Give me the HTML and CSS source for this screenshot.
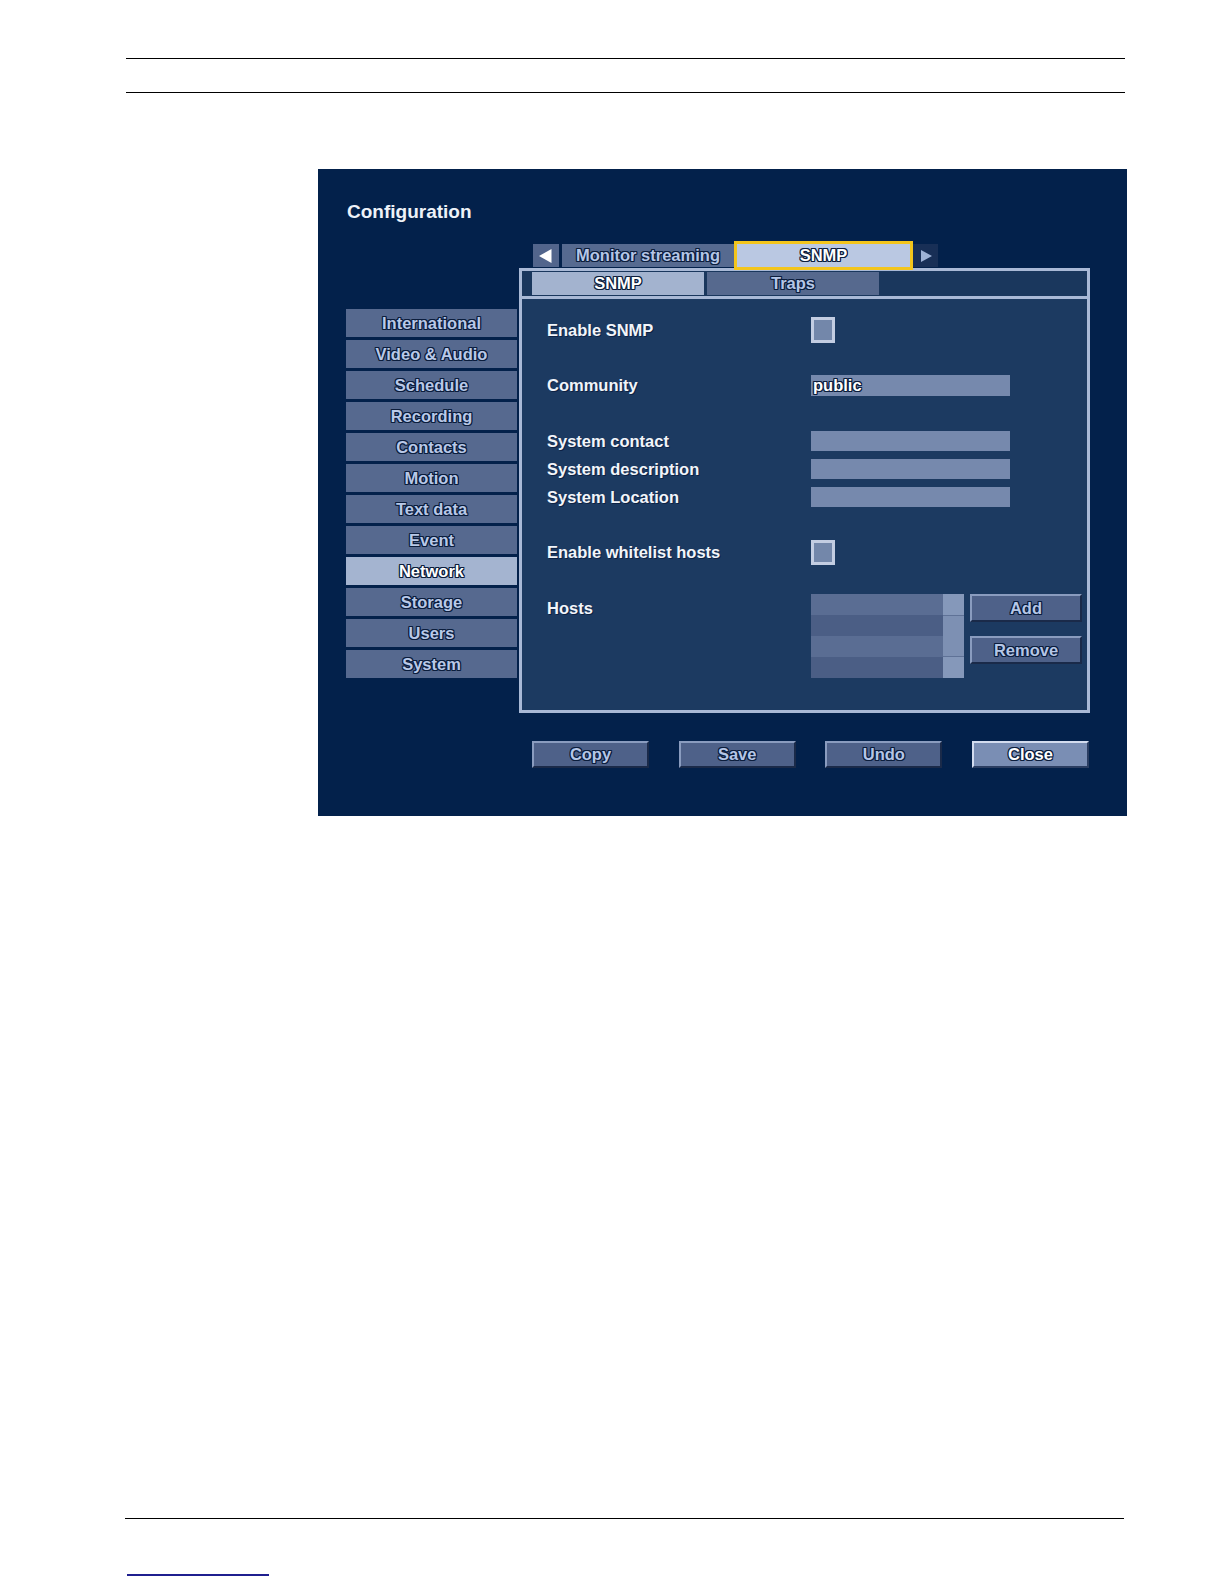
FILE: index.html
```html
<!DOCTYPE html>
<html lang="en">
<head>
<meta charset="utf-8">
<title>Configuration - SNMP</title>
<link rel="stylesheet" href="styles.css">
</head>
<body>
<div class="page">
  <div class="doc-head"></div>

  <div class="shot">
    <div class="title">Configuration</div>
    <div class="shot-body">
      <nav class="side">
        <div class="side-item">International</div>
        <div class="side-item">Video &amp; Audio</div>
        <div class="side-item">Schedule</div>
        <div class="side-item">Recording</div>
        <div class="side-item">Contacts</div>
        <div class="side-item">Motion</div>
        <div class="side-item">Text data</div>
        <div class="side-item">Event</div>
        <div class="side-item active">Network</div>
        <div class="side-item">Storage</div>
        <div class="side-item">Users</div>
        <div class="side-item">System</div>
      </nav>

      <div class="main">
        <div class="top-tabs">
          <div class="arrow-btn">
            <svg width="26" height="23" viewBox="0 0 26 23"><polygon points="18.5,5 18.5,19 6,12" fill="#ffffff"/></svg>
          </div>
          <div class="top-tab">Monitor streaming</div>
          <div class="top-tab focused">SNMP</div>
          <div class="arrow-btn dim">
            <svg width="25" height="23" viewBox="0 0 25 23"><polygon points="8,6 8,18 19,12" fill="#9db2d6"/></svg>
          </div>
        </div>

        <div class="panel">
          <div class="sub-tabs">
            <div class="sub-tab active">SNMP</div>
            <div class="sub-tab">Traps</div>
          </div>

          <div class="form">
            <div class="row r-snmp">
              <span class="label">Enable SNMP</span>
              <span class="check"></span>
            </div>
            <div class="row r-community">
              <span class="label">Community</span>
              <span class="field">public</span>
            </div>
            <div class="row r-contact">
              <span class="label">System contact</span>
              <span class="field"></span>
            </div>
            <div class="row r-near">
              <span class="label">System description</span>
              <span class="field"></span>
            </div>
            <div class="row r-near">
              <span class="label">System Location</span>
              <span class="field"></span>
            </div>
            <div class="row r-white">
              <span class="label">Enable whitelist hosts</span>
              <span class="check"></span>
            </div>
            <div class="row r-hosts">
              <span class="label label-top">Hosts</span>
              <div class="hosts">
                <div class="host-list">
                  <div class="host-rows">
                    <div class="host-row"></div>
                    <div class="host-row alt"></div>
                    <div class="host-row"></div>
                    <div class="host-row alt"></div>
                  </div>
                  <div class="scroll">
                    <div class="scroll-btn"></div>
                    <div class="scroll-track"></div>
                    <div class="scroll-btn"></div>
                  </div>
                </div>
                <div class="host-btns">
                  <div class="btn btn-add">Add</div>
                  <div class="btn btn-remove">Remove</div>
                </div>
              </div>
            </div>
          </div>
        </div>

        <div class="actions">
          <div class="btn btn-act">Copy</div>
          <div class="btn btn-act">Save</div>
          <div class="btn btn-act">Undo</div>
          <div class="btn btn-act primary">Close</div>
        </div>
      </div>
    </div>
  </div>

  <div class="doc-foot"></div>
  <div class="doc-link"></div>
</div>
</body>
</html>
```

FILE: styles.css
```css
:root {
  --ol: -1px -1px 0 #0b1d3c, 0 -1px 0 #0b1d3c, 1px -1px 0 #0b1d3c,
        -1px 0 0 #0b1d3c, 1px 0 0 #0b1d3c,
        -1px 1px 0 #0b1d3c, 0 1px 0 #0b1d3c, 1px 1px 0 #0b1d3c;
}

html, body {
  margin: 0;
  padding: 0;
  background: #ffffff;
}

body {
  font-family: "Liberation Sans", Arial, sans-serif;
}

.page {
  width: 1224px;
  min-height: 1584px;
}

.doc-head {
  margin: 58px 0 0 126px;
  width: 999px;
  height: 33px;
  border-top: 1px solid #000;
  border-bottom: 1px solid #000;
}

.shot {
  margin: 76px 0 0 318px;
  width: 809px;
  height: 647px;
  background: #03214b;
  box-sizing: border-box;
  overflow: hidden;
}

.title {
  padding: 32px 0 0 29px;
  line-height: 22px;
  font-size: 19px;
  font-weight: bold;
  color: #eef2f8;
}

.shot-body {
  display: flex;
  margin-top: 21px;
  padding-left: 28px;
}

/* sidebar */
.side {
  width: 171px;
  margin-top: 65px;
  margin-right: 2px;
  display: flex;
  flex-direction: column;
  gap: 3px;
}

.side-item {
  height: 28px;
  line-height: 28px;
  background: #56698f;
  color: #b9c9e8;
  text-align: center;
  font-size: 16.5px;
  font-weight: bold;
  text-shadow: var(--ol);
}

.side-item.active {
  background: #a4b4d0;
  color: #ffffff;
}

/* main column */
.main {
  width: 571px;
}

.top-tabs {
  height: 24px;
  display: flex;
  align-items: flex-start;
  gap: 3px;
  padding-left: 14px;
}

.arrow-btn {
  width: 26px;
  height: 23px;
  background: #52658c;
}

.arrow-btn svg {
  display: block;
}

.arrow-btn.dim {
  width: 25px;
  background: #182f56;
}

.top-tab {
  width: 172px;
  height: 23px;
  line-height: 23px;
  background: #566a90;
  color: #b5c6e6;
  text-align: center;
  font-size: 16.5px;
  font-weight: bold;
  text-shadow: var(--ol);
}

.top-tab.focused {
  width: 173px;
  background: #bac8e2;
  color: #ffffff;
  outline: 3px solid #f3c51c;
  position: relative;
  z-index: 2;
}

/* panel */
.panel {
  height: 445px;
  box-sizing: border-box;
  border: 3px solid #a9b9d6;
  background: #1c3a61;
}

.sub-tabs {
  box-sizing: border-box;
  height: 28px;
  padding: 1px 0 1px 10px;
  border-bottom: 3px solid #a9b9d6;
  display: flex;
  gap: 3px;
  background: #1a375d;
}

.sub-tab {
  width: 172px;
  height: 23px;
  line-height: 23px;
  background: #56698e;
  color: #b5c6e6;
  text-align: center;
  font-size: 16.5px;
  font-weight: bold;
  text-shadow: var(--ol);
}

.sub-tab.active {
  background: #a3b3cf;
  color: #ffffff;
}

.form {
  padding: 18px 0 0 25px;
}

.row {
  display: flex;
  align-items: center;
}

.r-community { margin-top: 32px; }
.r-contact { margin-top: 35px; }
.r-near { margin-top: 8px; }
.r-white { margin-top: 33px; }
.r-hosts { margin-top: 29px; align-items: flex-start; }

.label {
  width: 264px;
  flex: none;
  color: #f2f5fa;
  font-size: 16.5px;
  font-weight: bold;
  text-shadow: 1px 1px 0 #0d2143;
}

.label-top {
  line-height: 28px;
}

.check {
  width: 24px;
  height: 26px;
  box-sizing: border-box;
  border: 3px solid #c3cde2;
  background: #7387aa;
}

.r-white .check {
  height: 25px;
}

.field {
  width: 199px;
  height: 20px;
  line-height: 21px;
  padding-left: 2px;
  box-sizing: border-box;
  background: #7689ad;
  color: #ffffff;
  font-size: 16.5px;
  font-weight: bold;
  text-shadow: var(--ol);
}

.r-community .field {
  height: 21px;
}

/* hosts */
.hosts {
  display: flex;
  gap: 6px;
}

.host-list {
  display: flex;
  width: 153px;
  height: 84px;
}

.host-rows {
  width: 132px;
  display: flex;
  flex-direction: column;
}

.host-row {
  height: 21px;
  background: #5a6d93;
}

.host-row.alt {
  background: #4b5e85;
}

.scroll {
  width: 21px;
  display: flex;
  flex-direction: column;
  background: #8194b7;
}

.scroll-btn {
  height: 21px;
  background: #8598ba;
}

.scroll-track {
  flex: 1;
  border-top: 1px solid #5f7297;
  border-bottom: 1px solid #5f7297;
  background: #7d90b3;
}

.host-btns {
  width: 112px;
  display: flex;
  flex-direction: column;
}

/* buttons */
.btn {
  box-sizing: border-box;
  border: 2px solid;
  border-color: #8a9cbf #1a2a49 #1a2a49 #8a9cbf;
  background: #4e6189;
  color: #b5c6e6;
  text-align: center;
  font-size: 16.5px;
  font-weight: bold;
  text-shadow: var(--ol);
}

.btn-add {
  height: 28px;
  line-height: 24px;
}

.btn-remove {
  margin-top: 14px;
  height: 28px;
  line-height: 24px;
}

.actions {
  margin-top: 28px;
  padding: 0 1px 0 13px;
  display: flex;
  justify-content: space-between;
}

.btn-act {
  width: 117px;
  height: 27px;
  line-height: 23px;
}

.btn-act.primary {
  background: #7a8eb4;
  border-color: #d3dcef #2a3d61 #2a3d61 #d3dcef;
  color: #ffffff;
}

.doc-foot {
  margin: 702px 0 0 125px;
  width: 999px;
  height: 0;
  border-top: 1px solid #000;
}

.doc-link {
  margin: 55px 0 0 127px;
  width: 142px;
  height: 2px;
  background: #1f1f8f;
}
```
